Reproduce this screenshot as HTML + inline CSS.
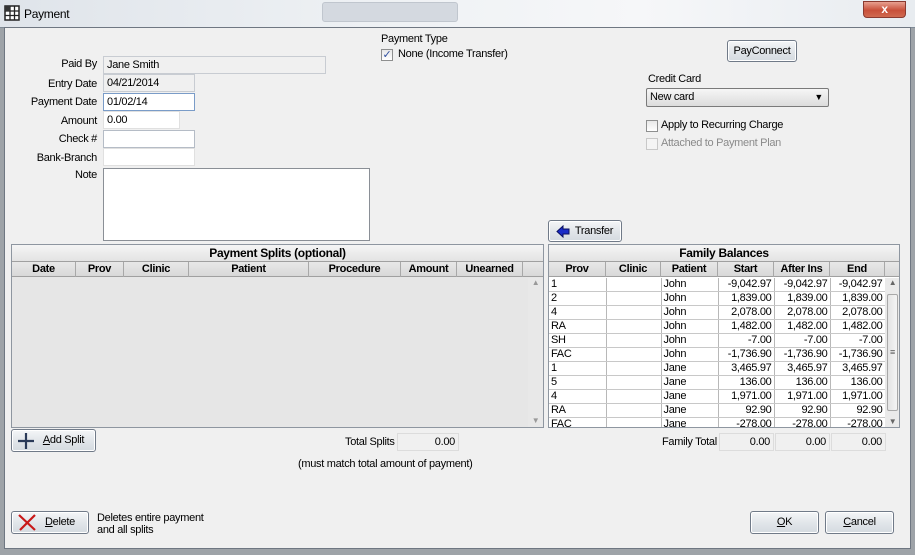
<!DOCTYPE html>
<html><head><meta charset="utf-8"><style>
*{box-sizing:border-box;margin:0;padding:0}
body{width:915px;height:555px;overflow:hidden;background:#9ea3a8;font-family:"Liberation Sans",sans-serif;font-size:11px;letter-spacing:-0.3px;color:#000;position:relative}
.a{position:absolute}
.title{left:0;top:0;width:915px;height:28px;background:linear-gradient(90deg,#dfe4ea,#eef1f4 40%,#f6f7f9 70%,#e8ecf0);border-bottom:1px solid #7f8a96}
.body{left:4px;top:27px;width:907px;height:522px;background:#f0f0f0;border:1px solid #6f7782}
.lbl{text-align:right;width:90px;left:7px}
.fld{background:#fff;border:1px solid #b5bcc6;padding:1px 3px;height:18px;line-height:15px}
.ro{background:#f0f0f0;border-color:#c8ccd2}
.btn{border:1px solid #707a88;border-radius:3px;background:linear-gradient(#f4f6f8,#e2e6ea 50%,#d4dae0);text-align:center;line-height:20px;box-shadow:inset 0 0 0 1px #fff}
.grid{border:1px solid #8e96a0;background:#fff}
.gt{height:17px;background:linear-gradient(#f5f5f5,#e3e3e3);font-weight:bold;font-size:12px;text-align:center;line-height:17px;border-bottom:1px solid #a0a0a0}
.gh{height:15px;background:linear-gradient(#e8e8e8,#d8d8d8);font-weight:bold;line-height:15px;border-bottom:1px solid #a0a0a0;position:relative}
.gh span{position:absolute;top:0;text-align:center;border-right:1px solid #a8a8a8;height:15px}
table{border-collapse:collapse;position:absolute;left:0;top:33px;table-layout:fixed}
td{height:13.8px;line-height:13px;padding:0 2px;border-right:1px solid #b8b8b8;border-bottom:1px solid #c8c8c8;font-size:11px;white-space:nowrap;overflow:hidden}
td.r{text-align:right}
.cb{width:12px;height:12px;border:1px solid #8e8f8f;background:linear-gradient(#e8e8e8,#fff)}
</style></head><body>
<div class="a title"></div>
<svg class="a" style="left:4px;top:5px" width="16" height="16"><rect x="1" y="1" width="14" height="14" fill="#fff" stroke="#222" stroke-width="1.5"/><path d="M1 6H15M1 10.5H15M6 1V15M10.5 1V15" stroke="#222" stroke-width="1.3"/><rect x="1" y="1" width="5" height="5" fill="#333"/></svg>
<div class="a" style="left:24px;top:7px;font-size:12px">Payment</div>
<div class="a" style="left:322px;top:2px;width:136px;height:20px;border-radius:3px;background:#d4d9e0;border:1px solid #c0c6ce"></div>
<div class="a" style="left:863px;top:1px;width:43px;height:17px;border-radius:0 0 4px 4px;background:linear-gradient(#e8a090,#c8503a 55%,#d06a50);border:1px solid #8a3a30;color:#fff;font-weight:bold;text-align:center;line-height:15px;font-size:12px">x</div>
<div class="a body"></div>

<div class="a lbl" style="top:58px">Paid By</div>
<div class="a fld ro" style="left:103px;top:56px;width:223px">Jane Smith</div>
<div class="a lbl" style="top:78px">Entry Date</div>
<div class="a fld ro" style="left:103px;top:74px;width:92px">04/21/2014</div>
<div class="a lbl" style="top:96px">Payment Date</div>
<div class="a fld" style="left:103px;top:93px;width:92px;border-color:#7a9cc8">01/02/14</div>
<div class="a lbl" style="top:115px">Amount</div>
<div class="a fld" style="left:103px;top:111px;width:77px;border-color:#e0e0e0">0.00</div>
<div class="a lbl" style="top:133px">Check #</div>
<div class="a fld" style="left:103px;top:130px;width:92px"></div>
<div class="a lbl" style="top:152px">Bank-Branch</div>
<div class="a fld" style="left:103px;top:148px;width:92px;border-color:#e0e0e0"></div>
<div class="a lbl" style="top:169px">Note</div>
<div class="a fld" style="left:103px;top:168px;width:267px;height:73px;border-color:#8a8f96"></div>

<div class="a" style="left:381px;top:33px">Payment Type</div>
<div class="a cb" style="left:381px;top:49px;font-size:11px;line-height:10px;color:#3050a0;text-align:center">✓</div>
<div class="a" style="left:398px;top:48px">None (Income Transfer)</div>

<div class="a btn" style="left:727px;top:40px;width:70px;height:22px">PayConnect</div>
<div class="a" style="left:648px;top:73px">Credit Card</div>
<div class="a" style="left:646px;top:88px;width:183px;height:19px;border:1px solid #7a7a7a;border-radius:2px;background:linear-gradient(#f6f6f6,#dcdcdc);padding-left:3px;line-height:17px">New card<span style="position:absolute;right:5px;top:0;font-size:9px">▼</span></div>
<div class="a cb" style="left:646px;top:120px"></div>
<div class="a" style="left:661px;top:119px">Apply to Recurring Charge</div>
<div class="a cb" style="left:646px;top:138px;border-color:#c8c8c8;background:#f4f4f4"></div>
<div class="a" style="left:661px;top:137px;color:#8a8a8a">Attached to Payment Plan</div>

<div class="a btn" style="left:548px;top:220px;width:74px;height:22px;padding-left:18px">Transfer
<svg class="a" style="left:7px;top:4px" width="14" height="13"><path d="M1 6.5L7 1V4H13V9H7V12Z" fill="#1a2cc8" stroke="#0a1060"/></svg></div>

<!-- Payment splits -->
<div class="a grid" style="left:11px;top:244px;width:533px;height:184px;background:#e6e6e6">
<div class="gt">Payment Splits (optional)</div>
<div class="gh"><span style="left:0;width:64px">Date</span><span style="left:64px;width:48px">Prov</span><span style="left:112px;width:65px">Clinic</span><span style="left:177px;width:120px">Patient</span><span style="left:297px;width:92px">Procedure</span><span style="left:389px;width:56px">Amount</span><span style="left:445px;width:66px">Unearned</span></div>
<div class="a" style="right:0;top:33px;width:15px;height:149px;background:#e8e8e8;color:#999;font-size:8px;text-align:center">▲<div style="position:absolute;bottom:2px;width:15px">▼</div></div>
</div>

<!-- Family balances -->
<div class="a grid" style="left:548px;top:244px;width:352px;height:184px;overflow:hidden">
<div class="gt">Family Balances</div>
<div class="gh"><span style="left:0;width:57px">Prov</span><span style="left:57px;width:55px">Clinic</span><span style="left:112px;width:57px">Patient</span><span style="left:169px;width:56px">Start</span><span style="left:225px;width:56px">After Ins</span><span style="left:281px;width:55px">End</span></div>
<table style="width:336px">
<colgroup><col style="width:57px"><col style="width:55px"><col style="width:57px"><col style="width:56px"><col style="width:56px"><col style="width:55px"></colgroup>
<tr><td>1</td><td></td><td>John</td><td class="r">-9,042.97</td><td class="r">-9,042.97</td><td class="r">-9,042.97</td></tr>
<tr><td>2</td><td></td><td>John</td><td class="r">1,839.00</td><td class="r">1,839.00</td><td class="r">1,839.00</td></tr>
<tr><td>4</td><td></td><td>John</td><td class="r">2,078.00</td><td class="r">2,078.00</td><td class="r">2,078.00</td></tr>
<tr><td>RA</td><td></td><td>John</td><td class="r">1,482.00</td><td class="r">1,482.00</td><td class="r">1,482.00</td></tr>
<tr><td>SH</td><td></td><td>John</td><td class="r">-7.00</td><td class="r">-7.00</td><td class="r">-7.00</td></tr>
<tr><td>FAC</td><td></td><td>John</td><td class="r">-1,736.90</td><td class="r">-1,736.90</td><td class="r">-1,736.90</td></tr>
<tr><td>1</td><td></td><td>Jane</td><td class="r">3,465.97</td><td class="r">3,465.97</td><td class="r">3,465.97</td></tr>
<tr><td>5</td><td></td><td>Jane</td><td class="r">136.00</td><td class="r">136.00</td><td class="r">136.00</td></tr>
<tr><td>4</td><td></td><td>Jane</td><td class="r">1,971.00</td><td class="r">1,971.00</td><td class="r">1,971.00</td></tr>
<tr><td>RA</td><td></td><td>Jane</td><td class="r">92.90</td><td class="r">92.90</td><td class="r">92.90</td></tr>
<tr><td>FAC</td><td></td><td>Jane</td><td class="r">-278.00</td><td class="r">-278.00</td><td class="r">-278.00</td></tr>
</table>
<div class="a" style="left:336px;top:33px;width:15px;height:150px;background:#eaeaea;color:#666;font-size:8px;text-align:center">▲
<div style="position:absolute;left:2px;top:16px;width:11px;height:117px;border:1px solid #a8a8a8;border-radius:2px;background:linear-gradient(90deg,#e4e4e4,#f4f4f4)"><div style="position:absolute;top:52px;width:9px;font-size:9px;color:#555">≡</div></div>
<div style="position:absolute;bottom:2px;width:15px">▼</div></div>
</div>

<div class="a btn" style="left:11px;top:429px;width:85px;height:23px;padding-left:20px"><u>A</u>dd Split</div>
<svg class="a" style="left:17px;top:432px" width="18" height="18"><path d="M9 1V17M1 9H17" stroke="#2a3a58" stroke-width="2.2"/></svg>
<div class="a" style="left:345px;top:436px">Total Splits</div>
<div class="a fld ro" style="left:397px;top:433px;width:62px;text-align:right;border-color:#dcdcdc">0.00</div>
<div class="a" style="left:298px;top:458px">(must match total amount of payment)</div>

<div class="a" style="left:662px;top:436px">Family Total</div>
<div class="a fld ro" style="left:719px;top:433px;width:55px;text-align:right;border-color:#dcdcdc">0.00</div>
<div class="a fld ro" style="left:775px;top:433px;width:55px;text-align:right;border-color:#dcdcdc">0.00</div>
<div class="a fld ro" style="left:831px;top:433px;width:55px;text-align:right;border-color:#dcdcdc">0.00</div>

<div class="a btn" style="left:11px;top:511px;width:78px;height:23px;padding-left:20px"><u>D</u>elete</div>
<svg class="a" style="left:17px;top:513px" width="20" height="19"><path d="M2 2L18 17M18 2L3 17" stroke="#c81818" stroke-width="2.2"/></svg>
<div class="a" style="left:97px;top:512px;line-height:12px">Deletes entire payment<br>and all splits</div>

<div class="a btn" style="left:750px;top:511px;width:69px;height:23px"><u>O</u>K</div>
<div class="a btn" style="left:825px;top:511px;width:69px;height:23px"><u>C</u>ancel</div>
</body></html>
